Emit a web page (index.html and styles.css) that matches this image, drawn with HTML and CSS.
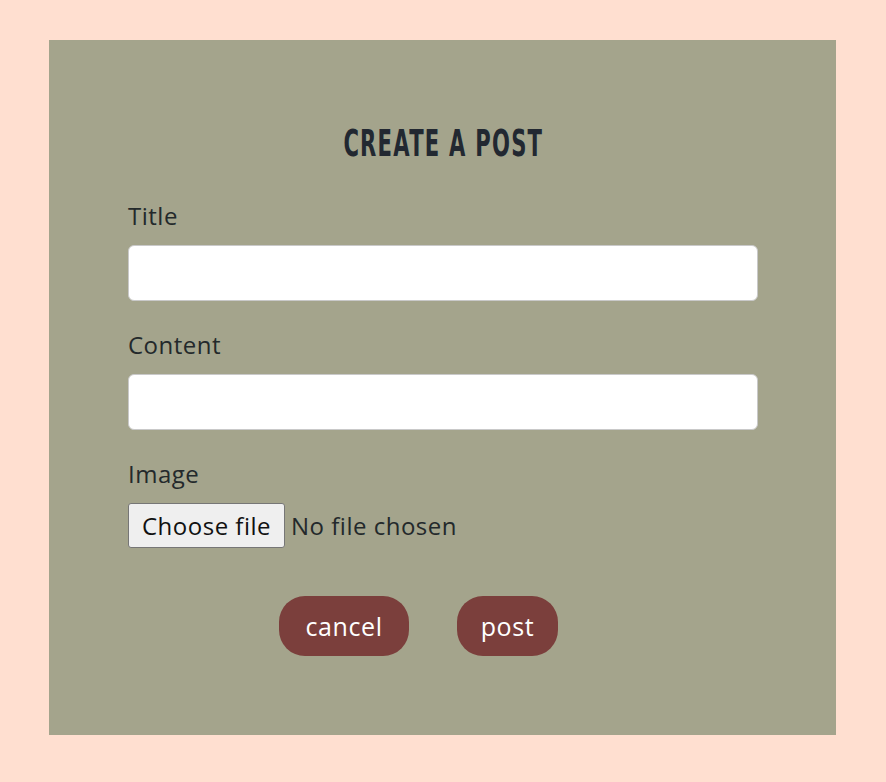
FILE: index.html
```html
<!DOCTYPE html>
<html>
<head>
<meta charset="utf-8">
<link rel="stylesheet" href="styles.css">
</head>
<body>
<div class="panel">
  <h1 class="heading"><span class="heading-text">CREATE A POST</span></h1>
  <form class="form">
    <label class="label" for="title">Title</label>
    <input class="field" id="title" type="text">
    <label class="label" for="content">Content</label>
    <input class="field" id="content" type="text">
    <label class="label" for="image">Image</label>
    <div class="file-row">
      <input class="file-input" id="image" type="file">
      <label class="file-btn" for="image">Choose file</label>
      <span class="file-name">No file chosen</span>
    </div>
    <div class="actions">
      <button class="btn btn-cancel" type="button">cancel</button>
      <button class="btn btn-post" type="button">post</button>
    </div>
  </form>
</div>
</body>
</html>
```
FILE: styles.css
```css
html, body {
  margin: 0;
  padding: 0;
}
body {
  background: #ffdfd0;
  font-family: "Open Sans", "Lato", sans-serif;
  color: #23292b;
  padding-top: 40px;
  height: 782px;
  box-sizing: border-box;
}
.panel {
  margin-left: 49px;
  width: 787px;
  height: 695px;
  background: #a4a48c;
  box-sizing: border-box;
  padding: 84px 78px 0 79px;
}
.heading {
  margin: 0;
  text-align: center;
  font-family: "DejaVu Sans", sans-serif;
  font-weight: bold;
  font-size: 37px;
  line-height: 40px;
  color: #222831;
}
.heading-text {
  display: inline-block;
  letter-spacing: 2.2px;
  transform: scaleX(0.57);
}
.form {
  display: flex;
  flex-direction: column;
  margin-top: 37px;
}
.label {
  font-size: 24px;
  letter-spacing: 0.5px;
  line-height: 30px;
  height: 30px;
  margin-bottom: 14px;
}
.field {
  height: 56px;
  box-sizing: border-box;
  border: 1px solid #c9c9c9;
  border-radius: 6px;
  background: #fff;
  margin: 0 0 29px 0;
  font-size: 20px;
  padding: 0 12px;
}
.file-row {
  display: flex;
  align-items: center;
  height: 45px;
  gap: 6px;
}
.file-input {
  display: none;
}
.file-btn {
  height: 45px;
  box-sizing: border-box;
  display: flex;
  align-items: center;
  font-size: 24px;
  letter-spacing: 0.5px;
  color: #111;
  background: #efefef;
  border: 1px solid #767676;
  border-radius: 3px;
  padding: 0 13px;
}
.file-name {
  font-size: 24px;
  letter-spacing: 0.5px;
}
.actions {
  display: flex;
  gap: 48px;
  margin-top: 48px;
  padding-left: 151px;
}
.btn {
  height: 60px;
  border: none;
  border-radius: 26px;
  background: #7b3f3c;
  color: #fff;
  font-family: inherit;
  font-size: 25px;
  letter-spacing: 0.6px;
  padding: 0;
}
.btn-cancel {
  width: 130px;
}
.btn-post {
  width: 101px;
}
```
